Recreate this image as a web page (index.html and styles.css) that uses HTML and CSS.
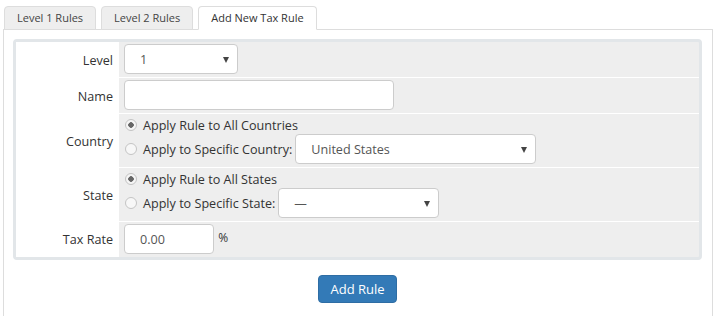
FILE: index.html
```html
<!DOCTYPE html>
<html lang="en">
<head>
    <meta charset="UTF-8">
    <title>Tax Rules</title>
    <link rel="stylesheet" href="styles.css">
</head>
<body>
    <div class="page">
        <ul class="tabs">
            <li class="tab">Level 1 Rules</li>
            <li class="tab">Level 2 Rules</li>
            <li class="tab active">Add New Tax Rule</li>
        </ul>

        <div class="tab-panel">
            <table class="rule-form">
                <tr>
                    <th>Level</th>
                    <td>
                        <span class="select-wrap level-select">
                            <select><option>1</option><option>2</option></select>
                        </span>
                    </td>
                </tr>
                <tr>
                    <th>Name</th>
                    <td><input type="text" class="text-input name-input"></td>
                </tr>
                <tr>
                    <th>Country</th>
                    <td>
                        <label class="radio-line"><input type="radio" name="country" checked> Apply Rule to All Countries</label>
                        <label class="radio-line">
                            <input type="radio" name="country"> Apply to Specific Country:
                            <span class="select-wrap country-select">
                                <select><option>United States</option></select>
                            </span>
                        </label>
                    </td>
                </tr>
                <tr>
                    <th>State</th>
                    <td>
                        <label class="radio-line"><input type="radio" name="state" checked> Apply Rule to All States</label>
                        <label class="radio-line">
                            <input type="radio" name="state"> Apply to Specific State:
                            <span class="select-wrap state-select">
                                <select><option>&mdash;</option></select>
                            </span>
                        </label>
                    </td>
                </tr>
                <tr>
                    <th>Tax Rate</th>
                    <td><input type="text" class="text-input rate-input" value="0.00"> <span class="unit">%</span></td>
                </tr>
            </table>

            <div class="actions">
                <button class="btn-primary">Add Rule</button>
            </div>
        </div>
    </div>
</body>
</html>
```

FILE: styles.css
```css
body { margin: 0; font-family: "Open Sans", "Liberation Sans", sans-serif; font-size: 12.6px; color: #333; background: #fff; }
.page { padding: 6px 10px 0 3px; }

/* tabs */
.tabs { list-style: none; margin: 0 0 -1px 1px; padding: 0; display: flex; gap: 5px; }
.tab {
    font-size: 11px;
    height: 22px;
    line-height: 22px;
    padding: 0 12px;
    background: #eee;
    border: 1px solid #ddd;
    border-radius: 4px 4px 0 0;
    color: #444;
}
.tab.active { background: #fff; border-bottom-color: #fff; position: relative; z-index: 1; color: #333; }

.tab-panel { border: 1px solid #ddd; padding: 9px 10px 20px 9px; }

/* form table */
.rule-form {
    width: 100%;
    border-collapse: separate;
    border-spacing: 0;
    border: 3px solid #e2e6e9;
    border-radius: 4px;
    background: #eee;
}
.rule-form th {
    width: 97px;
    background: #fff;
    text-align: right;
    font-weight: normal;
    padding: 0 6px 0 0;
    vertical-align: middle;
}
.rule-form td { padding: 2px 5px 3px; border-bottom: 1px solid #fff; }
.rule-form tr:last-child td { border-bottom: 0; }

.text-input, .select-wrap select {
    box-sizing: border-box;
    height: 30px;
    border: 1px solid #ccc;
    border-radius: 4px;
    background: #fff;
    font: inherit;
    color: #555;
    padding: 0 15px;
    vertical-align: middle;
}
.name-input { width: 270px; }
.rate-input { width: 90px; }
.unit { font-size: 12px; margin-left: 1px; }

.select-wrap { position: relative; display: inline-block; vertical-align: middle; }
.select-wrap select { appearance: none; -webkit-appearance: none; width: 100%; }
.select-wrap::after {
    content: "";
    position: absolute;
    right: 9px;
    top: 13px;
    border-left: 3px solid transparent;
    border-right: 3px solid transparent;
    border-top: 6px solid #444;
    pointer-events: none;
}
.level-select { width: 114px; }
.country-select { width: 241px; }
.state-select { width: 161px; }

/* radio rows */
.radio-line { display: flex; align-items: center; gap: 6px; }
.radio-line:first-child { height: 18px; }
.radio-line .select-wrap { margin-left: -3px; }
.radio-line input[type="radio"] {
    appearance: none;
    -webkit-appearance: none;
    margin: 0 0 0 1px;
    width: 12px;
    height: 12px;
    border: 1px solid #c4c4c4;
    border-radius: 50%;
    background: #f7f7f7;
}
.radio-line input[type="radio"]:checked { background: radial-gradient(circle, #666 0 2.5px, #f5f5f5 3px); }

/* button */
.actions { display: flex; justify-content: center; margin-top: 15px; }
.btn-primary {
    font: inherit;
    font-size: 13px;
    color: #fff;
    background: #337ab7;
    border: 1px solid #2e6da4;
    border-radius: 4px;
    height: 28px;
    padding: 0 11px;
    cursor: pointer;
}
```
